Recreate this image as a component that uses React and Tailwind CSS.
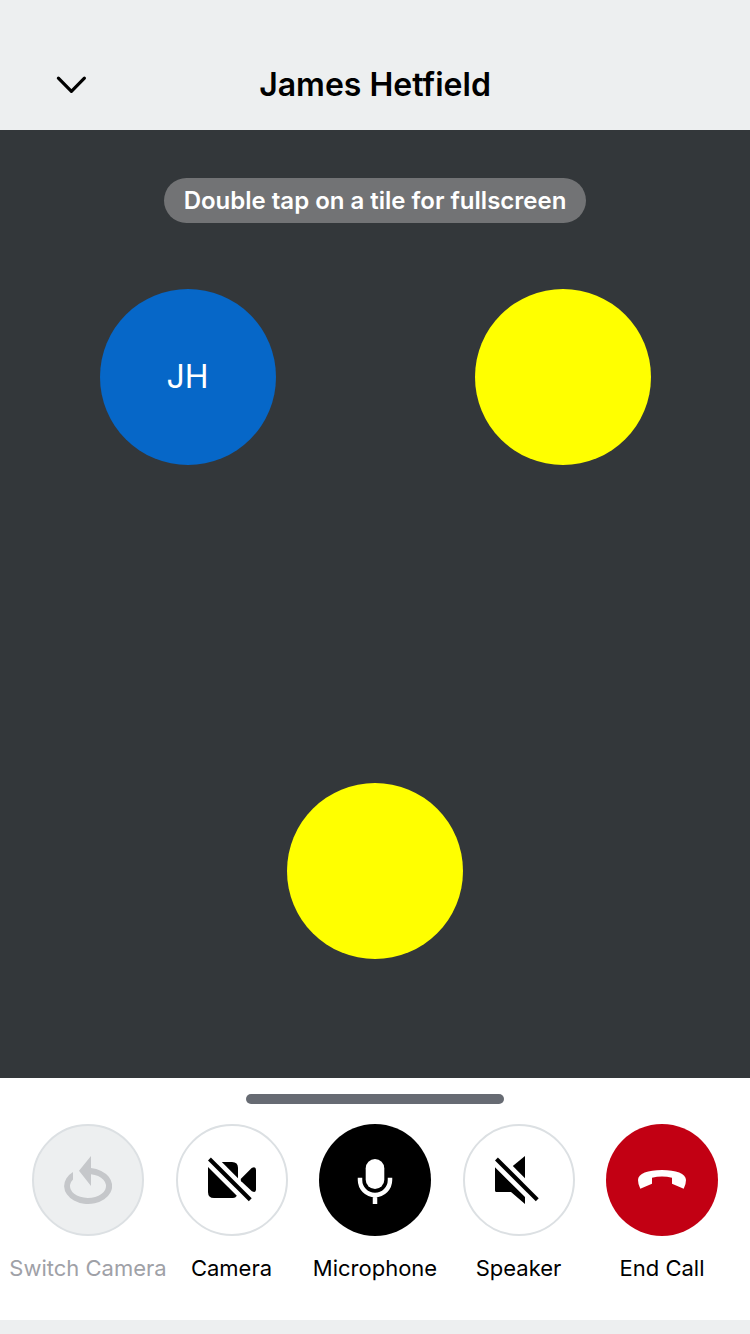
import React from "react";

const Icon = ({ children }) => (
  <svg viewBox="0 0 48 48" className="size-12" fill="currentColor" aria-hidden="true">
    {children}
  </svg>
);

const SwitchCameraIcon = () => (
  <Icon>
    <path d="M15 14.7 27 0V12.1A24 18 0 1 1 9 16V23.4A18 12 0 1 0 27 18.2V30Z" />
  </Icon>
);

const CameraOffIcon = () => (
  <Icon>
    <path d="M2.9 1.5 0 4.4 40.8 45.2 43.7 42.3Z" />
    <path d="M0 11 28.8 39.8Q27.5 42 25 42H6Q0 42 0 36Z" />
    <path d="M13.8 6H24Q30 6 30 12V22.2Z" />
    <path d="M33.2 22.4 43.7 12Q48 10 48 14V33.6Q48 37.4 43.9 35.3L33.2 25.2Q32 23.8 33.2 22.4Z" />
  </Icon>
);

const MicrophoneIcon = () => (
  <Icon>
    <rect x="14.7" y="3" width="18.6" height="30" rx="9.3" />
    <path d="M9 21.7V24A15 15 0 0 0 39 24V21.7M24 39V48" fill="none" stroke="currentColor" strokeWidth="4.5" />
  </Icon>
);

const SpeakerOffIcon = () => (
  <Icon>
    <path d="M2.9 1.5 0 4.4 40.8 45.2 43.7 42.3Z" />
    <path d="M0 11.3 30 41V48L16 36H1.5Q0 36 0 34.5Z" />
    <path d="M30 0V22.2L17.8 10Z" />
  </Icon>
);

const EndCallIcon = () => (
  <Icon>
    <path d="M0 24C0 17.5 10 14 24 14S48 17.5 48 24Q48 28.5 45.7 32.8L34 27.8V21.8Q24 19.2 14 21.8V27.8L2.3 32.8Q0 28.5 0 24Z" />
  </Icon>
);

const controls = [
  {
    label: "Switch Camera",
    icon: SwitchCameraIcon,
    disabled: true,
    circle: "border-2 border-[#dce0e3] bg-[#edeff0] text-[#c5c7ca]",
    text: "text-[#9fa1a7]",
  },
  { label: "Camera", icon: CameraOffIcon, circle: "border-2 border-[#dce0e3] bg-white text-black", text: "text-black" },
  { label: "Microphone", icon: MicrophoneIcon, circle: "bg-black text-white", text: "text-black" },
  { label: "Speaker", icon: SpeakerOffIcon, circle: "border-2 border-[#dce0e3] bg-white text-black", text: "text-black" },
  { label: "End Call", icon: EndCallIcon, circle: "bg-[#c20013] text-white", text: "text-black" },
];

function Avatar({ initials, color }) {
  return (
    <div className={`flex size-44 items-center justify-center rounded-full text-[32px] text-white ${color}`}>
      {initials}
    </div>
  );
}

function CallControl({ label, icon: ControlIcon, disabled, circle, text }) {
  return (
    <button type="button" disabled={disabled} className="flex w-28 flex-col items-center gap-4">
      <span className={`flex size-28 items-center justify-center rounded-full ${circle}`}>
        <ControlIcon />
      </span>
      <span className={`text-[22px] leading-8 whitespace-nowrap ${text}`}>{label}</span>
    </button>
  );
}

export default function App() {
  return (
    <div className="flex min-h-screen flex-col bg-[#edeff0] font-['Inter',sans-serif]">
      <header className="grid grid-cols-[48px_1fr_48px] items-center px-12 pt-15 pb-5">
        <button type="button" aria-label="Minimize call" className="text-black">
          <svg viewBox="0 0 48 48" className="size-12" fill="none" stroke="currentColor" strokeWidth="3.2" strokeLinecap="round" strokeLinejoin="round" aria-hidden="true">
            <path d="M10.4 17.2 23.4 30.3 36.4 17.2" />
          </svg>
        </button>
        <h1 className="text-center text-[32px] leading-[50px] font-semibold text-black">James Hetfield</h1>
      </header>

      <main className="relative flex flex-1 flex-col bg-[#33373a]">
        <p className="absolute inset-x-0 top-12 flex justify-center">
          <span className="rounded-3xl bg-[#727375] px-5 py-1.5 text-2xl leading-[33px] font-semibold text-white">
            Double tap on a tile for fullscreen
          </span>
        </p>
        <div className="grid flex-1 grid-cols-2 grid-rows-2">
          <div className="flex items-center justify-center">
            <Avatar initials="JH" color="bg-[#0667c8]" />
          </div>
          <div className="flex items-center justify-center">
            <Avatar color="bg-[#ffff00]" />
          </div>
          <div className="col-span-2 flex items-center justify-center">
            <Avatar color="bg-[#ffff00]" />
          </div>
        </div>
      </main>

      <footer className="relative -mt-10 mb-3.5 bg-white px-8 pt-4 pb-9">
        <div className="mx-auto h-2.5 w-[258px] rounded-full bg-[#676b73]" />
        <div className="mt-5 flex justify-between">
          {controls.map((control) => (
            <CallControl key={control.label} {...control} />
          ))}
        </div>
      </footer>
    </div>
  );
}
